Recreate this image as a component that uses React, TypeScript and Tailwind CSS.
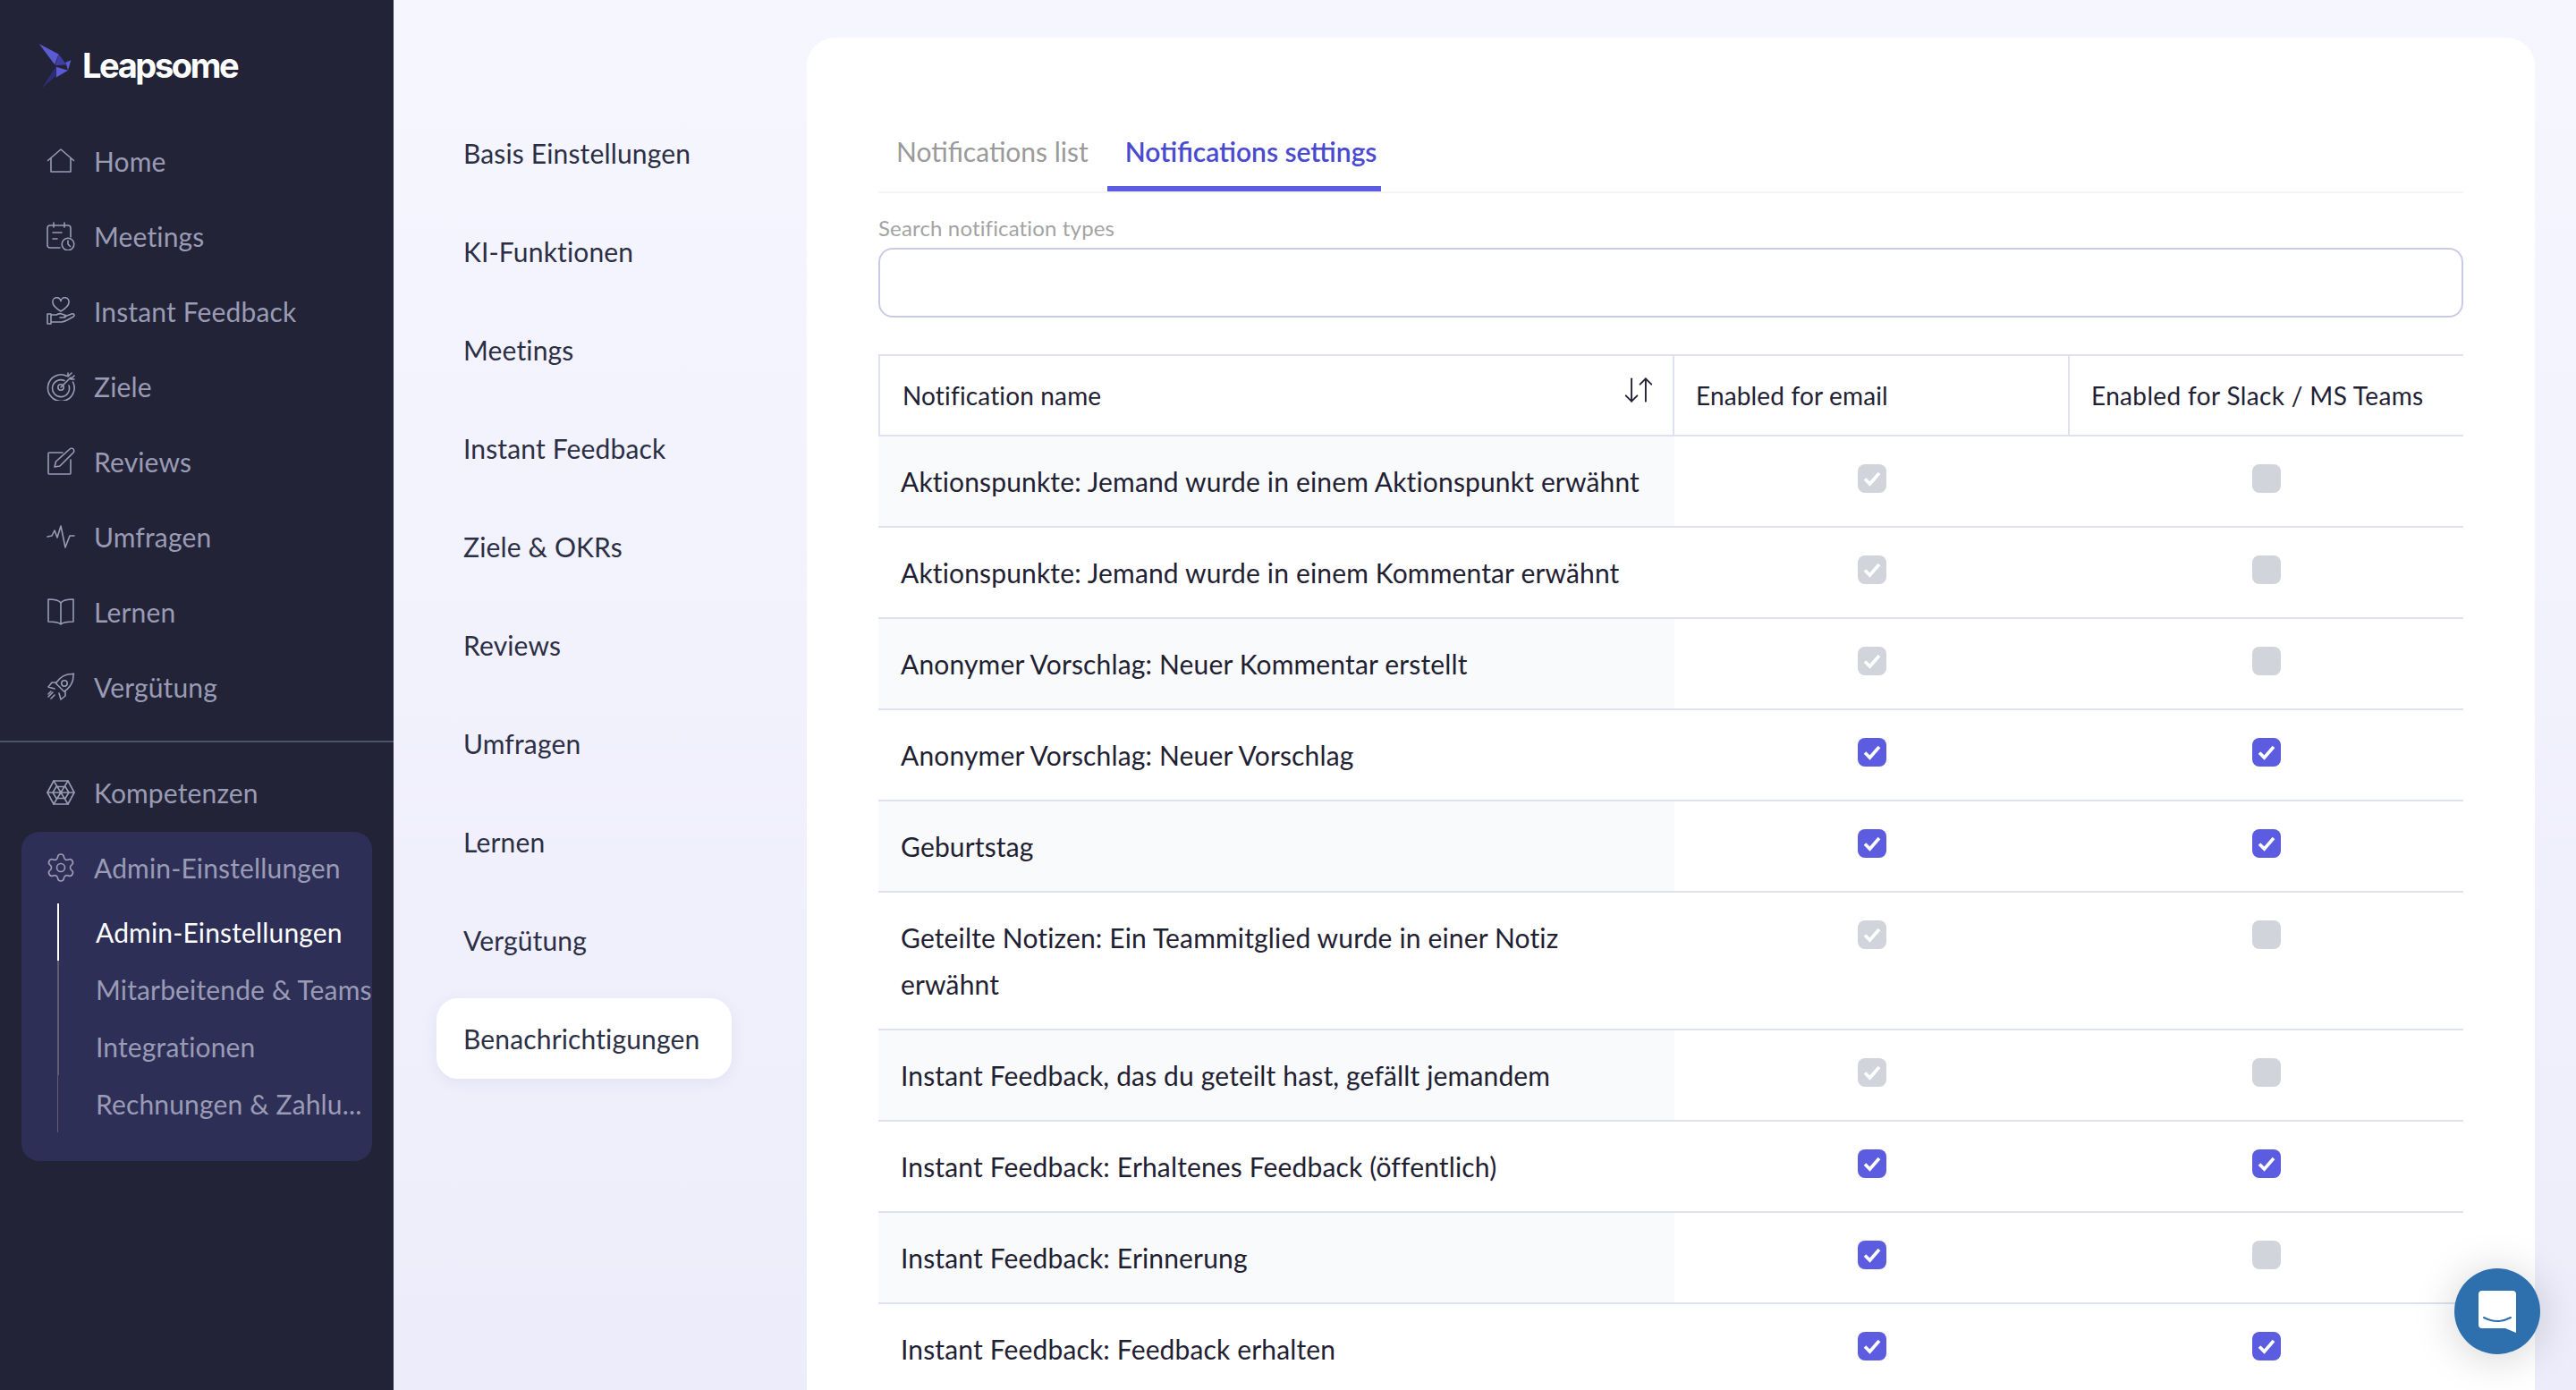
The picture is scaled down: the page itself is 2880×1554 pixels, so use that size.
import { ArrowDownUp, Settings } from "lucide-react";
import type { ReactNode } from "react";

const Stroke = ({ children }: { children: ReactNode }) => (
  <svg viewBox="0 0 32 32" fill="none" stroke="#9a9bb5" strokeWidth="1.6" strokeLinecap="round" strokeLinejoin="round" className="w-8 h-8 shrink-0">
    {children}
  </svg>
);

const icons: Record<string, ReactNode> = {
  home: <path d="M1.5 15.5 16 3l14.5 12.5M5 13v15h22V13" />,
  meetings: (
    <>
      <path d="M15 29H4a3 3 0 0 1-3-3V7a3 3 0 0 1 3-3h20a3 3 0 0 1 3 3v10M8 1v5M20 1v5M7 12h10M7 19h5" />
      <circle cx="24" cy="25" r="6.8" />
      <path d="M24 21v4l2.5 2.5" />
    </>
  ),
  feedback: (
    <>
      <path d="M16 16C11 13 7 10 7 6a4.4 4.4 0 0 1 9-1.5A4.4 4.4 0 0 1 25 6c0 4-4 7-9 10z" />
      <path d="M1 19h4v11H1zM5 20h6c2-1 4-2 6-1l3 1c2 0 2 3 0 3h-5M5 28h12c3 0 6-2 13-6 2-1 1-4-2-3l-8 3" />
    </>
  ),
  ziele: (
    <>
      <path d="M23 4.5A14.8 14.8 0 1 0 29.5 11M20 9.5A9.5 9.5 0 1 0 25 15" />
      <circle cx="16" cy="17" r="3.2" />
      <path d="M16 17 27 6M24 5v-4M24 5l4-4M27 8h4M27 8l4-4" />
    </>
  ),
  reviews: (
    <>
      <path d="M18 6H3a1 1 0 0 0-1 1v22a1 1 0 0 0 1 1h23a1 1 0 0 0 1-1V14" />
      <path d="M9 22l1.5-6L26 2c1-1 3-1 4 0s1 3 0 4L15 21z" />
    </>
  ),
  umfragen: <path d="M1 16l5-1 3-6 3 8 4-13 5 24 5-13h5" />,
  lernen: <path d="M16 6C14 3 10 2 2 2v25c8 0 12 1 14 3 2-2 6-3 14-3V2c-8 0-12 1-14 4zM16 6v24" />,
  rocket: (
    <>
      <path d="M30.5 1.5C22 1 15 5 11 11l-.5 1 9 9 1-.5c6-4 10-11 9.5-19.5z" />
      <path d="M11 11H6L2 16l7 2M21 21v5l-5 4-2-7" />
      <circle cx="20" cy="12" r="3.2" />
      <path d="M7 22l-5 5M9 25l-4 4M5 21l-3 3" />
    </>
  ),
  kompetenzen: (
    <>
      <path d="M8 3h16l7 13-7 13H8L1 16z" />
      <path d="M8 3l16 26M24 3 8 29M1 16h30M11 9.5h10l4 6.5-4 6.5H11L7 16z" />
    </>
  ),
};

const mainNav = [
  { icon: "home", label: "Home" },
  { icon: "meetings", label: "Meetings" },
  { icon: "feedback", label: "Instant Feedback" },
  { icon: "ziele", label: "Ziele" },
  { icon: "reviews", label: "Reviews" },
  { icon: "umfragen", label: "Umfragen" },
  { icon: "lernen", label: "Lernen" },
  { icon: "rocket", label: "Vergütung" },
];

const settingsNav = [
  "Basis Einstellungen",
  "KI-Funktionen",
  "Meetings",
  "Instant Feedback",
  "Ziele & OKRs",
  "Reviews",
  "Umfragen",
  "Lernen",
  "Vergütung",
  "Benachrichtigungen",
];

const rows: { name: string; email: boolean; slack: boolean; locked: boolean }[] = [
  { name: "Aktionspunkte: Jemand wurde in einem Aktionspunkt erwähnt", email: true, slack: false, locked: true },
  { name: "Aktionspunkte: Jemand wurde in einem Kommentar erwähnt", email: true, slack: false, locked: true },
  { name: "Anonymer Vorschlag: Neuer Kommentar erstellt", email: true, slack: false, locked: true },
  { name: "Anonymer Vorschlag: Neuer Vorschlag", email: true, slack: true, locked: false },
  { name: "Geburtstag", email: true, slack: true, locked: false },
  { name: "Geteilte Notizen: Ein Teammitglied wurde in einer Notiz erwähnt", email: true, slack: false, locked: true },
  { name: "Instant Feedback, das du geteilt hast, gefällt jemandem", email: true, slack: false, locked: true },
  { name: "Instant Feedback: Erhaltenes Feedback (öffentlich)", email: true, slack: true, locked: false },
  { name: "Instant Feedback: Erinnerung", email: true, slack: false, locked: false },
  { name: "Instant Feedback: Feedback erhalten", email: true, slack: true, locked: false },
];

const Checkbox = ({ checked, locked }: { checked: boolean; locked: boolean }) => (
  <div className={`w-8 h-8 rounded-lg flex items-center justify-center ${checked && !locked ? "bg-[#5c5ce0]" : "bg-[#d1d5db]"}`}>
    {checked && (
      <svg viewBox="0 0 32 32" fill="none" stroke="white" strokeWidth="3.6" className="w-8 h-8">
        <path d="M8 16.5l5.5 5.5L24 10" />
      </svg>
    )}
  </div>
);

const NavItem = ({ icon, label }: { icon: ReactNode; label: string }) => (
  <div className="h-[84px] flex items-center gap-[21px] pl-[52px] text-[#9a9bb5]">
    {icon}
    <span>{label}</span>
  </div>
);

export default function App() {
  return (
    <div className="relative w-[2880px] h-[1554px] overflow-hidden flex bg-linear-to-b from-[#f6f6ff] to-[#edecfa] font-['Lato',sans-serif] text-[30px] leading-[52px] tracking-[0.15px]">
      <aside className="w-[440px] shrink-0 bg-[#222336]">
        <div className="h-[138px] pt-[47px] pl-[43px] flex items-start gap-[12px]">
          <svg viewBox="40 50 112 158" className="w-[37px] h-[53px]">
            <polygon points="42,55 108,90 95,125" fill="#5b5bd6" />
            <polygon points="108,90 135,125 97,128" fill="#3f3fa3" />
            <polygon points="132,118 150,110 140,145" fill="#5b5bd6" />
            <polygon points="100,133 140,145 100,168" fill="#5b5bd6" />
            <polygon points="97,135 97,165 52,205" fill="#2e2e78" />
          </svg>
          <span className="font-['Inter',sans-serif] font-bold text-[38px] leading-[53px] tracking-[-2.4px] text-white">Leapsome</span>
        </div>
        {mainNav.map((n) => (
          <NavItem key={n.label} icon={<Stroke>{icons[n.icon]}</Stroke>} label={n.label} />
        ))}
        <div className="mt-[18px] mb-[14px] h-[2px] bg-[#4b5563]" />
        <NavItem icon={<Stroke>{icons.kompetenzen}</Stroke>} label="Kompetenzen" />
        <div className="mx-6 mt-[2px] h-[368px] rounded-[20px] bg-[#2e2f57]">
          <div className="h-[80px] flex items-center gap-[19px] pl-[26px] text-[#9a9bb5]">
            <Settings size={36} strokeWidth={1.1} color="#9a9bb5" className="shrink-0" />
            <span>Admin-Einstellungen</span>
          </div>
          <div className="ml-[40px]">
            <div className="h-16 flex items-center pl-[41px] border-l-2 border-white text-white">Admin-Einstellungen</div>
            <div className="h-16 flex items-center pl-[41px] border-l-2 border-[#5b5f70] text-[#9a9bb5] whitespace-nowrap">Mitarbeitende &amp; Teams</div>
            <div className="h-16 flex items-center pl-[41px] border-l-2 border-[#5b5f70] text-[#9a9bb5]">Integrationen</div>
            <div className="h-16 flex items-center pl-[42px] border-l border-[#5b5f70] text-[#9a9bb5] whitespace-nowrap">Rechnungen &amp; Zahlu...</div>
          </div>
        </div>
      </aside>

      <nav className="w-[462px] shrink-0 pt-[126px] pl-12 flex flex-col gap-5 text-[#2b2f45]">
        {settingsNav.map((s) => (
          <div
            key={s}
            className={`h-[90px] w-[330px] px-[30px] flex items-center rounded-3xl ${s === "Benachrichtigungen" ? "bg-white shadow-[0_4px_16px_rgba(90,90,160,0.08)]" : ""}`}
          >
            {s}
          </div>
        ))}
      </nav>

      <main className="w-[1932px] h-[1600px] mt-[42px] bg-white rounded-[32px] px-20 pt-[108px] text-[#1f2133]">
        <div className="flex border-b-2 border-[#f3f4f6] tracking-normal">
          <div className="pl-[20px] pr-[21px] pb-5 border-b-[6px] border-transparent text-[#9a9a9a] leading-[38px]">Notifications list</div>
          <div className="pl-[20px] pr-[5px] pb-5 border-b-[6px] border-[#5c5ce0] text-[#4a4ad0] font-semibold leading-[38px]">Notifications settings</div>
        </div>

        <div className="mt-[23px] text-[24px] leading-8 text-[#a3a3a3]">Search notification types</div>
        <div className="mt-[6px] h-[78px] rounded-2xl border-2 border-[#c9cbe6]" />

        <div className="mt-[41px]">
          <div className="flex h-[92px] border-y-2 border-[#e0e1f0] text-[28px]">
            <div className="w-[890px] border-x-2 border-[#e0e1f0] pl-[25px] pr-[19px] flex items-center justify-between">
              <span>Notification name</span>
              <ArrowDownUp size={38} strokeWidth={1.2} color="#222336" className="-mt-3" />
            </div>
            <div className="w-[442px] border-r-2 border-[#e0e1f0] pl-[24px] flex items-center">Enabled for email</div>
            <div className="flex-1 pl-[24px] flex items-center whitespace-nowrap tracking-[0.35px]">Enabled for Slack / MS Teams</div>
          </div>
          {rows.map((r, i) => (
            <div key={r.name} className="flex border-b-2 border-[#e0e1f0]">
              <div className={`w-[890px] pl-[25px] pr-6 py-6 ${i % 2 === 0 ? "bg-[#f9fafb]" : ""}`}>{r.name}</div>
              <div className="w-[442px] pt-[31px] flex justify-center">
                <Checkbox checked={r.email} locked={r.locked} />
              </div>
              <div className="flex-1 pt-[31px] flex justify-center">
                <Checkbox checked={r.slack} locked={r.locked} />
              </div>
            </div>
          ))}
        </div>
      </main>

      <div className="absolute right-10 bottom-10 w-24 h-24 rounded-full bg-[#2e6fad] flex items-center justify-center shadow-[0_4px_48px_rgba(0,0,0,0.18)]">
        <svg viewBox="0 0 42 47" className="w-[42px] h-[47px]">
          <path d="M4 0H38a4 4 0 0 1 4 4V47L30 42H4a4 4 0 0 1-4-4V4a4 4 0 0 1 4-4z" fill="white" />
          <path d="M6 30Q21 38 36 30" fill="none" stroke="#2e6fad" strokeWidth="2" strokeLinecap="round" />
        </svg>
      </div>
    </div>
  );
}
